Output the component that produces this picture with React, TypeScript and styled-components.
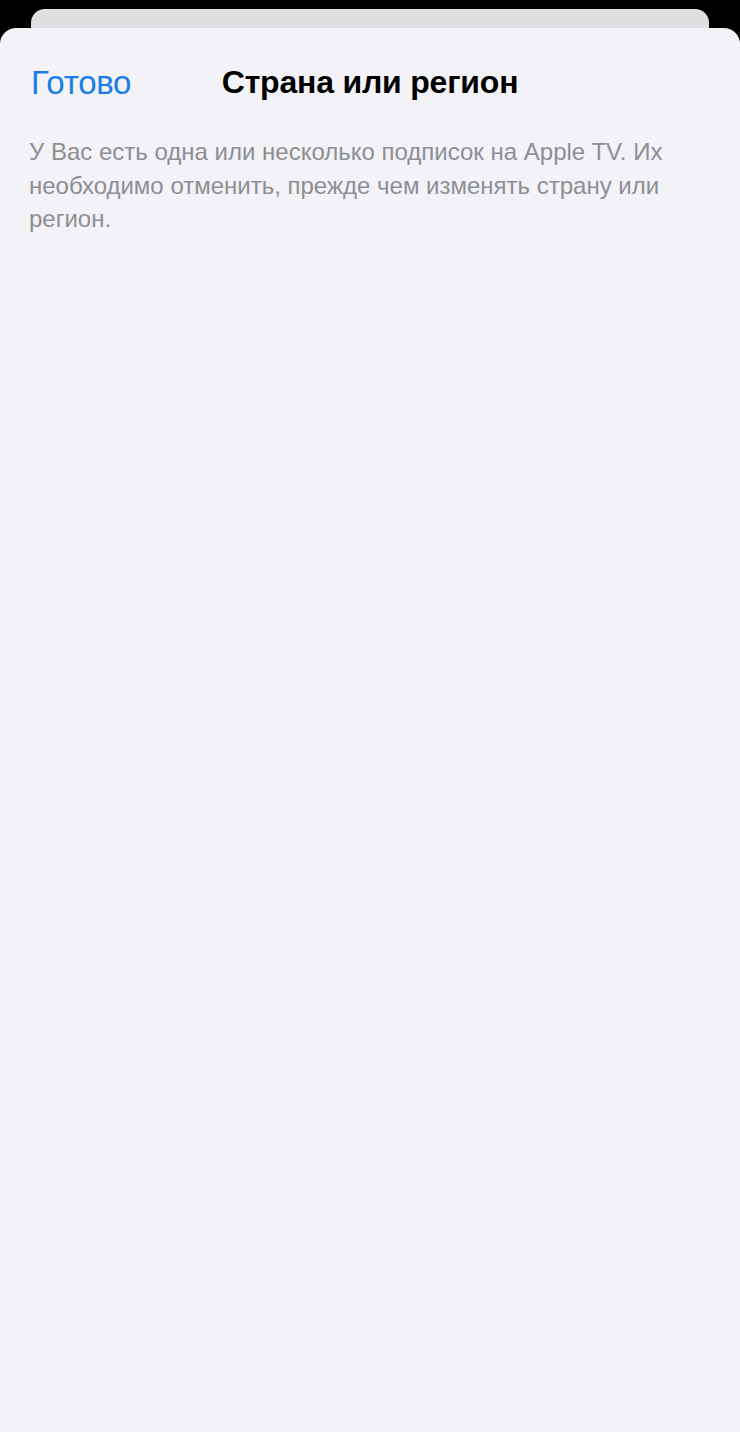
import React from "react";
import styled, { createGlobalStyle } from "styled-components";

const Global = createGlobalStyle`
  html, body { margin: 0; padding: 0; background: #000; }
  body { font-family: "Liberation Sans", "Noto Sans", Arial, sans-serif; }
  #root { min-height: 1432px; }
`;

const Screen = styled.div`
  width: 740px;
  height: 1432px;
  background: #000;
  display: flex;
  flex-direction: column;
  overflow: hidden;
`;

const BackCard = styled.div`
  margin: 9px 31px 0;
  height: 30px;
  background: #e0e0e2;
  border-radius: 14px 14px 0 0;
  flex-shrink: 0;
`;

const Sheet = styled.div`
  margin-top: -11px;
  flex: 1;
  background: #f2f2f7;
  border-radius: 16px 16px 0 0;
  display: flex;
  flex-direction: column;
`;

const NavBar = styled.div`
  position: relative;
  height: 106px;
  display: flex;
  align-items: center;
  padding: 0 31px;
  box-sizing: border-box;
`;

const DoneButton = styled.button`
  border: none;
  background: none;
  padding: 0;
  font-family: inherit;
  font-size: 33px;
  color: #1a7ee8;
  letter-spacing: -0.3px;
  cursor: pointer;
  line-height: 1;
  margin-top: 2px;
`;

const Title = styled.h1`
  position: absolute;
  left: 0;
  right: 0;
  top: 0;
  bottom: 0;
  display: flex;
  align-items: center;
  justify-content: center;
  margin: 0;
  padding-top: 2px;
  font-size: 32px;
  font-weight: 700;
  color: #000;
  letter-spacing: -0.2px;
  pointer-events: none;
  line-height: 1;
`;

const Message = styled.p`
  margin: 0;
  padding: 0 29px;
  font-size: 24px;
  line-height: 33.5px;
  color: #8e8e93;
  width: 700px;
  box-sizing: border-box;
  margin-top: 1px;
`;

export default function App() {
  return (
    <>
      <Global />
      <Screen>
        <BackCard />
        <Sheet>
          <NavBar>
            <DoneButton>Готово</DoneButton>
            <Title>Страна или регион</Title>
          </NavBar>
          <Message>
            У Вас есть одна или несколько подписок на Apple TV. Их необходимо
            отменить, прежде чем изменять страну или регион.
          </Message>
        </Sheet>
      </Screen>
    </>
  );
}
